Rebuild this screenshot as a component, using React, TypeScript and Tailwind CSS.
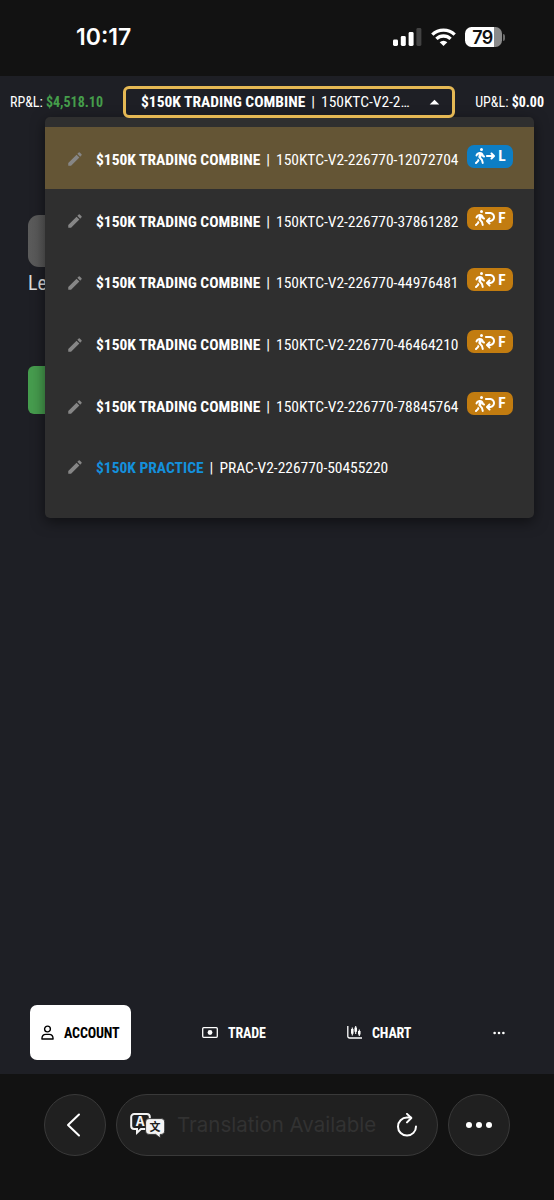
import { BsThreeDots } from 'react-icons/bs';
import { FaPersonWalkingArrowLoopLeft, FaPersonWalkingArrowRight } from 'react-icons/fa6';
import { MdArrowDropUp, MdEdit } from 'react-icons/md';

interface Account {
  name: string;
  number: string;
  status?: 'L' | 'F';
  practice?: boolean;
}

const accounts: Account[] = [
  { name: '$150K TRADING COMBINE', number: '150KTC-V2-226770-12072704', status: 'L' },
  { name: '$150K TRADING COMBINE', number: '150KTC-V2-226770-37861282', status: 'F' },
  { name: '$150K TRADING COMBINE', number: '150KTC-V2-226770-44976481', status: 'F' },
  { name: '$150K TRADING COMBINE', number: '150KTC-V2-226770-46464210', status: 'F' },
  { name: '$150K TRADING COMBINE', number: '150KTC-V2-226770-78845764', status: 'F' },
  { name: '$150K PRACTICE', number: 'PRAC-V2-226770-50455220', practice: true },
];

function StatusBar() {
  return (
    <div className="flex h-[76px] items-start justify-between bg-[#121212] pl-[76px] pr-[49px]">
      <span className="mt-6 font-['Inter'] text-[23px] leading-[27px] font-semibold">10:17</span>
      <div className="mt-[27px] flex items-start">
        <svg className="mt-px mr-[9px] h-[18px] w-[29px]" viewBox="0 0 29 18" fill="#fff">
          <rect x="0" y="11.5" width="5" height="6.5" rx="1.4" />
          <rect x="7.8" y="8" width="5" height="10" rx="1.4" />
          <rect x="15.6" y="4" width="5" height="14" rx="1.4" />
          <rect x="23.4" y="0" width="5" height="18" rx="1.4" fill="#434343" />
        </svg>
        <svg className="mt-px mr-[9px] h-[18px] w-[25px]" viewBox="0 0 25 18" fill="none" stroke="#fff" strokeWidth="3.3">
          <path d="M1.3 6.6a16 16 0 0 1 22.4 0" />
          <path d="M5.4 10.9a10.2 10.2 0 0 1 14.2 0" />
          <path d="M12.5 18 8.7 14.2a5.5 5.5 0 0 1 7.6 0z" fill="#fff" stroke="none" />
        </svg>
        <div className="flex items-center">
          <div className="flex h-5 w-[37px] items-center justify-center overflow-hidden rounded-[6.5px] bg-linear-to-r from-white from-79% to-[#8a8a8a] to-79% pr-[2px] font-['Inter'] text-[18px] font-semibold tracking-[-0.6px] text-[#121212]">
            79
          </div>
          <div className="ml-px h-[7px] w-[2px] rounded-r-full bg-[#6c6c6c]" />
        </div>
      </div>
    </div>
  );
}

function AccountRow({ account, selected }: { account: Account; selected: boolean }) {
  return (
    <div
      className={`flex items-center pl-[21px] ${account.practice ? 'h-[60px]' : 'h-[61.8px]'} ${selected ? 'bg-[#645535]' : ''}`}
    >
      <MdEdit className="mt-[3px] size-[18px] text-[#868686]" />
      <div className="mt-[5px] ml-3 flex text-[15.5px] whitespace-pre">
        <span className={`font-bold ${account.practice ? 'text-[#1490dc]' : ''}`}>{account.name}</span>
        <span className="mx-[6px]">|</span>
        <span className="tracking-[-0.03px]">{account.number}</span>
      </div>
      {account.status && (
        <div
          className={`mt-[-3px] ml-[9px] flex h-[23px] w-[46px] items-center justify-center gap-1 rounded-[7px] text-[15.5px] font-bold ${account.status === 'L' ? 'bg-[#0d7ec5]' : 'bg-[#c27c10]'}`}
        >
          {account.status === 'L' ? (
            <FaPersonWalkingArrowRight className="h-4 w-5" />
          ) : (
            <FaPersonWalkingArrowLoopLeft className="h-4 w-5" />
          )}
          <span className="mt-px -ml-px">{account.status}</span>
        </div>
      )}
    </div>
  );
}

function BottomNav() {
  return (
    <nav className="flex h-[55px] items-center text-[14px] font-bold tracking-[-0.15px]">
      <div className="flex h-full w-[101px] ml-[30px] items-center rounded-[7px] bg-white pl-[11px] text-black">
        <svg className="mb-px h-[15px] w-[13px]" viewBox="0 0 13 15" fill="none" stroke="currentColor" strokeWidth="1.4" strokeLinejoin="round">
          <circle cx="6.5" cy="4" r="2.9" />
          <path d="M.9 14c0-3 1.8-4.6 4-4.6h3.2c2.2 0 4 1.6 4 4.6z" />
        </svg>
        <span className="mt-[2px] ml-[10px]">ACCOUNT</span>
      </div>
      <div className="ml-[71px] flex w-[65px] items-center">
        <svg className="h-[11px] w-4" viewBox="0 0 16 11" fill="none" stroke="currentColor" strokeWidth="1.3">
          <rect x=".7" y=".7" width="14.6" height="9.6" rx="1" />
          <circle cx="8" cy="5.5" r="2.4" fill="currentColor" stroke="none" />
        </svg>
        <span className="mt-[2px] ml-[10px]">TRADE</span>
      </div>
      <div className="ml-[80px] flex w-[65px] items-center">
        <svg className="h-[13px] w-[15px]" viewBox="0 0 15 13" fill="none" stroke="currentColor" strokeWidth="1.3">
          <path d="M.8 0v10.2a1.8 1.8 0 0 0 1.8 1.8H15" />
          <path d="M5.3 1.5v8M8.7 0v8M12.3 3.5v6.5" strokeWidth="1.1" />
          <path d="M5.3 3v4.7M8.7 1.5v4.2M12.3 5v3.5" strokeWidth="2.5" />
        </svg>
        <span className="mt-[2px] ml-[10px]">CHART</span>
      </div>
      <BsThreeDots className="ml-[80px] size-[14px]" />
    </nav>
  );
}

function BrowserBar() {
  return (
    <div className="flex h-[126px] gap-[10px] bg-[#121212] pt-5 pl-[44px]">
      <div className="flex size-[62px] items-center justify-center rounded-full border border-[#393939] bg-[#202020]">
        <svg className="mr-1 h-6 w-[15px]" viewBox="0 0 15 24" fill="none" stroke="#fff" strokeWidth="2" strokeLinecap="round" strokeLinejoin="round">
          <path d="M13 1.5 2 12l11 10.5" />
        </svg>
      </div>
      <div className="flex h-[62px] w-[322px] items-center rounded-full border border-[#393939] bg-[#202020] pl-[13px]">
        <svg className="h-[25px] w-[35px]" viewBox="0 0 35 25">
          <path
            d="M4.2 1h12.6a3 3 0 0 1 3 3v9a3 3 0 0 1-3 3H11l-4 3.7V16H4.2a3 3 0 0 1-3-3V4a3 3 0 0 1 3-3z"
            fill="none"
            stroke="#f4f4f4"
            strokeWidth="2"
          />
          <text x="10.2" y="13" textAnchor="middle" fontSize="12.5" fontWeight="700" fontFamily="Inter, sans-serif" fill="#f4f4f4">
            A
          </text>
          <path
            d="M19 5.6h12.3a3.4 3.4 0 0 1 3.4 3.4v9a3.4 3.4 0 0 1-3.4 3.4h-1.1V25l-4.4-3.6H19a3.4 3.4 0 0 1-3.4-3.4V9A3.4 3.4 0 0 1 19 5.6z"
            fill="#f4f4f4"
            stroke="#202020"
            strokeWidth=".8"
          />
          <text x="25" y="17.6" textAnchor="middle" fontSize="11" fontWeight="700" fontFamily="'Noto Sans CJK SC', sans-serif" fill="#202020">
            文
          </text>
        </svg>
        <span className="ml-[12px] w-[201px] font-['Inter'] text-[20.5px] whitespace-nowrap text-[#323232]">
          Translation Available
        </span>
        <svg className="ml-[18px] h-6 w-[22px]" viewBox="0 0 22 24" fill="none" stroke="#fff" strokeWidth="2" strokeLinecap="round" strokeLinejoin="round">
          <path d="M20 13.5a9 9 0 1 1-9-8.9h3.8" />
          <path d="M11 .9l4.3 4.1-4.3 4.4" />
        </svg>
      </div>
      <div className="flex size-[62px] items-center justify-center gap-[4.5px] rounded-full border border-[#393939] bg-[#202020]">
        <span className="size-[5.5px] rounded-full bg-white" />
        <span className="size-[5.5px] rounded-full bg-white" />
        <span className="size-[5.5px] rounded-full bg-white" />
      </div>
    </div>
  );
}

export default function App() {
  return (
    <div className="flex h-[1200px] w-[554px] flex-col overflow-hidden bg-[#1e1f25] font-['Roboto_Condensed','Roboto',sans-serif] text-white font-stretch-75%">
      <StatusBar />

      {/* Profit and loss header with the account picker */}
      <header className="relative flex h-[51px] items-center justify-between px-[10px] text-[14px]">
        <div className="pt-px">
          RP&amp;L: <span className="font-bold text-[#459d4b]">$4,518.10</span>
        </div>
        <div className="absolute top-[10px] left-[123px] z-20 flex h-8 w-[332px] items-center rounded-[6px] border-[3px] border-[#e5b854] pl-[15px] text-[15.5px] whitespace-pre">
          <span className="mt-px font-bold">$150K TRADING COMBINE</span>
          <span className="mx-[6px] mt-px">|</span>
          <span className="mt-px tracking-[-0.03px]">150KTC-V2-2…</span>
          <MdArrowDropUp className="absolute right-[6px] size-[23px]" />
        </div>
        <div className="pt-px">
          UP&amp;L: <span className="font-bold">$0.00</span>
        </div>
        <div className="absolute top-[41px] left-[45px] z-10 h-[401px] w-[489px] rounded-[5px] bg-[#2f2f2f] pt-[10px] shadow-[0_4px_14px_rgba(0,0,0,0.5)]">
          {accounts.map((account, i) => (
            <AccountRow key={account.number} account={account} selected={i === 0} />
          ))}
        </div>
      </header>

      <main className="flex-1 pt-[88px] pl-7">
        <div className="h-[52px] w-24 rounded-[11px] bg-linear-to-r from-[#5b5b5b] to-[#4a4a4a]" />
        <div className="mt-1 h-6 text-[20px] leading-6 text-[#dddddd]">Le</div>
        <div className="mt-[71px] h-12 w-32 rounded-[6px] bg-[#469c4e]" />
      </main>

      <BottomNav />
      <div className="h-[14px] shrink-0" />
      <BrowserBar />
    </div>
  );
}
